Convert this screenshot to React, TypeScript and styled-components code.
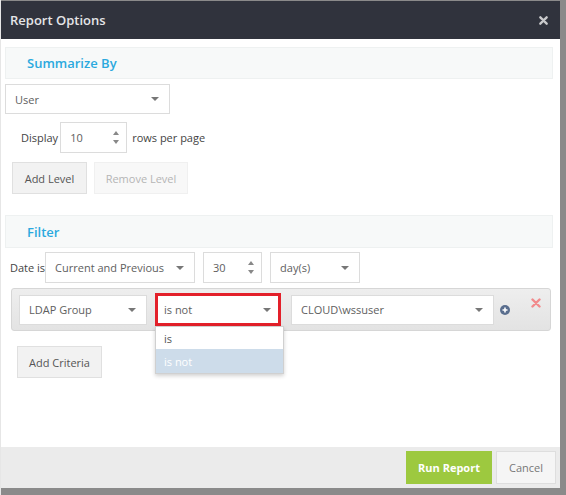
import React from "react";
import styled, { createGlobalStyle } from "styled-components";

const Global = createGlobalStyle`
  html, body { margin: 0; padding: 0; }
  body {
    background: #8a8a8a;
    font-family: "Open Sans", "Noto Sans", "Liberation Sans", sans-serif;
    width: 566px;
    height: 495px;
    overflow: hidden;
  }
  * { box-sizing: border-box; }
`;

const Page = styled.div`
  width: 566px;
  height: 495px;
  padding-top: 1px;
  padding-left: 1px;
  border-left: 1px solid #e6e6e6;
  display: flex;
  background: #8a8a8a;
`;

const Modal = styled.div`
  width: 559px;
  height: 487px;
  background: #fff;
  display: flex;
  flex-direction: column;
  margin-left: -1px;
`;

const Header = styled.div`
  height: 38px;
  background: #30333d;
  display: flex;
  align-items: center;
  justify-content: space-between;
  padding: 0 12px 0 9px;
`;

const Title = styled.div`
  color: #e4e5e7;
  font-size: 13px;
  font-weight: 600;
`;

const CloseIcon = styled.svg`
  width: 9px;
  height: 9px;
  display: block;
`;

const Body = styled.div`
  flex: 1;
  padding: 8px 7px 0 4px;
  display: flex;
  flex-direction: column;
`;

const SectionBar = styled.div<{ $h: number; $mt?: number }>`
  height: ${(p) => p.$h}px;
  margin-top: ${(p) => p.$mt ?? 0}px;
  background: #f7f9f9;
  border: 1px solid #eef1f1;
  display: flex;
  align-items: center;
  padding-left: 21px;
  color: #2ba9de;
  font-size: 13px;
  font-weight: 600;
`;

const Select = styled.div<{ $w: number; $h?: number; $ml?: number }>`
  width: ${(p) => p.$w}px;
  height: ${(p) => p.$h ?? 30}px;
  margin-left: ${(p) => p.$ml ?? 0}px;
  background: #fff;
  border: 1px solid #dcdcdc;
  display: flex;
  align-items: center;
  justify-content: space-between;
  padding: 0 10px 0 9px;
  color: #5e5e5e;
  font-size: 11px;
  flex-shrink: 0;
`;

const Caret = styled.span`
  width: 0;
  height: 0;
  border-left: 4px solid transparent;
  border-right: 4px solid transparent;
  border-top: 4px solid #777;
`;

const Row = styled.div<{ $mt: number; $pl?: number; $gap?: number }>`
  display: flex;
  align-items: center;
  margin-top: ${(p) => p.$mt}px;
  padding-left: ${(p) => p.$pl ?? 0}px;
  gap: ${(p) => p.$gap ?? 0}px;
`;

const Label = styled.span<{ $mr?: number; $ml?: number }>`
  font-size: 11px;
  color: #444;
  margin-right: ${(p) => p.$mr ?? 0}px;
  margin-left: ${(p) => p.$ml ?? 0}px;
`;

const NumberBox = styled.div<{ $w: number; $ml?: number }>`
  width: ${(p) => p.$w}px;
  height: 31px;
  margin-left: ${(p) => p.$ml ?? 0}px;
  background: #fff;
  border: 1px solid #dcdcdc;
  display: flex;
  align-items: center;
  justify-content: space-between;
  padding: 0 7px 0 9px;
  color: #5e5e5e;
  font-size: 11px;
  flex-shrink: 0;
`;

const Spinner = styled.div`
  display: flex;
  flex-direction: column;
  gap: 5px;
`;

const Tri = styled.span<{ $up?: boolean }>`
  width: 0;
  height: 0;
  border-left: 3.5px solid transparent;
  border-right: 3.5px solid transparent;
  ${(p) =>
    p.$up ? "border-bottom: 4px solid #888;" : "border-top: 4px solid #888;"}
`;

const Button = styled.div<{ $w: number; $disabled?: boolean }>`
  width: ${(p) => p.$w}px;
  height: 32px;
  display: flex;
  align-items: center;
  justify-content: center;
  font-size: 11px;
  background: ${(p) => (p.$disabled ? "#f8f8f8" : "#f2f2f2")};
  border: 1px solid ${(p) => (p.$disabled ? "#f0f0f0" : "#e0e0e0")};
  color: ${(p) => (p.$disabled ? "#b5b5b5" : "#555")};
`;

const CriteriaBox = styled.div`
  margin-top: 5px;
  margin-left: 6px;
  width: 540px;
  height: 43px;
  border: 1px solid #d6d6d6;
  border-radius: 3px;
  background: linear-gradient(#eeeeee, #e3e3e3);
  display: flex;
  align-items: center;
  padding-left: 7px;
  position: relative;
`;

const Highlight = styled.div`
  margin-left: 8px;
  width: 126px;
  height: 33px;
  border: 3px solid #e3202a;
  position: relative;
  display: flex;
`;

const InnerSelect = styled.div`
  flex: 1;
  background: #fff;
  display: flex;
  align-items: center;
  justify-content: space-between;
  padding: 0 7px 0 6px;
  color: #5e5e5e;
  font-size: 11px;
`;

const Menu = styled.div`
  position: absolute;
  top: 30px;
  left: -3px;
  width: 129px;
  background: #fff;
  border: 1px solid #d0d0d0;
  box-shadow: 0 2px 4px rgba(0, 0, 0, 0.18);
  z-index: 5;
`;

const MenuItem = styled.div<{ $active?: boolean }>`
  height: ${(p) => (p.$active ? 24 : 22)}px;
  display: flex;
  align-items: center;
  padding-left: 8px;
  font-size: 11px;
  color: ${(p) => (p.$active ? "#fff" : "#555")};
  background: ${(p) => (p.$active ? "#cddcea" : "#fff")};
`;

const PlusIcon = styled.svg`
  margin-left: 6px;
  width: 10px;
  height: 10px;
  display: block;
`;

const RemoveIcon = styled.svg`
  position: absolute;
  right: 9px;
  top: 9px;
  width: 10px;
  height: 10px;
`;

const Footer = styled.div`
  height: 41px;
  background: #ebebeb;
  display: flex;
  align-items: center;
  justify-content: flex-end;
  gap: 4px;
  padding-right: 4px;
`;

const FooterButton = styled.div<{ $primary?: boolean; $w: number }>`
  width: ${(p) => p.$w}px;
  height: 33px;
  display: flex;
  align-items: center;
  justify-content: center;
  font-size: 11px;
  font-weight: ${(p) => (p.$primary ? 700 : 400)};
  background: ${(p) => (p.$primary ? "#9dc93f" : "#f5f5f5")};
  color: ${(p) => (p.$primary ? "#fff" : "#777")};
  border: 1px solid ${(p) => (p.$primary ? "#9dc93f" : "#dedede")};
`;

export default function App() {
  return (
    <>
      <Global />
      <Page>
        <Modal>
          <Header>
            <Title>Report Options</Title>
            <CloseIcon viewBox="0 0 10 10">
              <path d="M1.5 1.5 L8.5 8.5 M8.5 1.5 L1.5 8.5" stroke="#c9cacc" strokeWidth="2.6" strokeLinecap="round" />
            </CloseIcon>
          </Header>
          <Body>
            <SectionBar $h={32}>Summarize By</SectionBar>
            <Row $mt={5}>
              <Select $w={165}>
                User
                <Caret />
              </Select>
            </Row>
            <Row $mt={8} $pl={16}>
              <Label $mr={2}>Display</Label>
              <NumberBox $w={67}>
                10
                <Spinner>
                  <Tri $up />
                  <Tri />
                </Spinner>
              </NumberBox>
              <Label $ml={5}>rows per page</Label>
            </Row>
            <Row $mt={9} $pl={7} $gap={7}>
              <Button $w={75}>Add Level</Button>
              <Button $w={94} $disabled>
                Remove Level
              </Button>
            </Row>
            <SectionBar $h={33} $mt={21}>
              Filter
            </SectionBar>
            <Row $mt={4} $pl={5}>
              <Label>Date is</Label>
              <Select $w={150} $h={31}>
                Current and Previous
                <Caret />
              </Select>
              <NumberBox $w={59} $ml={8}>
                30
                <Spinner>
                  <Tri $up />
                  <Tri />
                </Spinner>
              </NumberBox>
              <Select $w={90} $h={31} $ml={8}>
                day(s)
                <Caret />
              </Select>
            </Row>
            <CriteriaBox>
              <Select $w={128} $h={30}>
                LDAP Group
                <Caret />
              </Select>
              <Highlight>
                <InnerSelect>
                  is not
                  <Caret />
                </InnerSelect>
                <Menu>
                  <MenuItem>is</MenuItem>
                  <MenuItem $active>is not</MenuItem>
                </Menu>
              </Highlight>
              <Select $w={203} $h={30} $ml={10}>
                CLOUD\wssuser
                <Caret />
              </Select>
              <PlusIcon viewBox="0 0 10 10">
                <circle cx="5" cy="5" r="5" fill="#5a6e8e" />
                <path d="M5 2.5 V7.5 M2.5 5 H7.5" stroke="#fff" strokeWidth="1.6" />
              </PlusIcon>
              <RemoveIcon viewBox="0 0 10 10">
                <path d="M1.5 1.5 L8.5 8.5 M8.5 1.5 L1.5 8.5" stroke="#f28a8c" strokeWidth="2.4" strokeLinecap="round" />
              </RemoveIcon>
            </CriteriaBox>
            <Row $mt={15} $pl={12}>
              <Button $w={85}>Add Criteria</Button>
            </Row>
          </Body>
          <Footer>
            <FooterButton $primary $w={86}>
              Run Report
            </FooterButton>
            <FooterButton $w={60}>Cancel</FooterButton>
          </Footer>
        </Modal>
      </Page>
    </>
  );
}
